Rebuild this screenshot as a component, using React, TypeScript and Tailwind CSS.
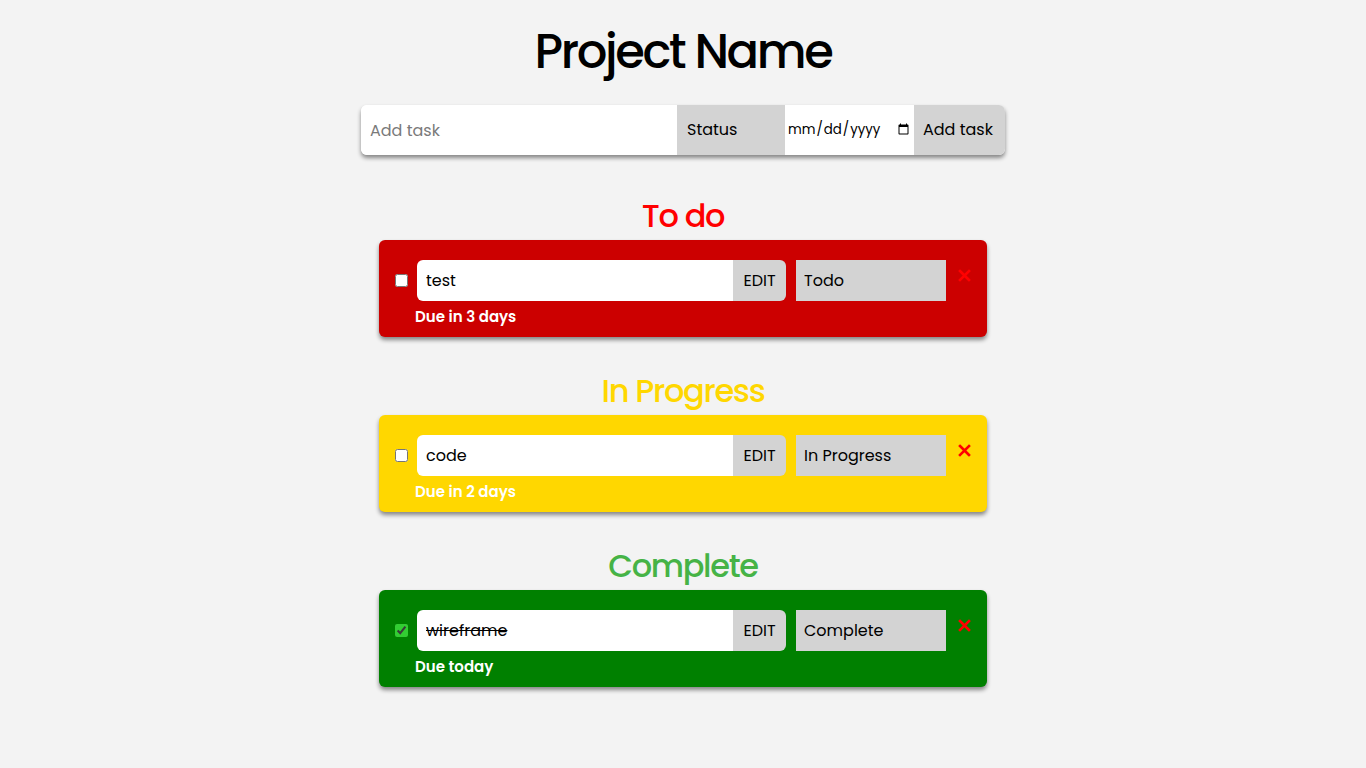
import type React from 'react';
import { useState } from 'react';

type Status = 'Todo' | 'In Progress' | 'Complete';

interface Task {
  id: number;
  name: string;
  status: Status;
  due: string;
  done: boolean;
}

const SECTIONS = [
  { status: 'Todo' as Status, title: 'To do', heading: 'text-[#ff0000]', card: 'bg-[#cc0000]' },
  { status: 'In Progress' as Status, title: 'In Progress', heading: 'text-[#ffd700]', card: 'bg-[#ffd700]' },
  { status: 'Complete' as Status, title: 'Complete', heading: 'text-[#46b346]', card: 'bg-[#008000]' },
];

const INITIAL: Task[] = [
  { id: 1, name: 'test', status: 'Todo', due: 'Due in 3 days', done: false },
  { id: 2, name: 'code', status: 'In Progress', due: 'Due in 2 days', done: false },
  { id: 3, name: 'wireframe', status: 'Complete', due: 'Due today', done: true },
];

const CloseIcon = () => (
  <svg className="w-[13px] h-[13px]" viewBox="0 0 13 13" fill="none">
    <path d="M2 2l9 9M11 2l-9 9" stroke="#ff0000" strokeWidth="2.6" strokeLinecap="square" />
  </svg>
);

const App: React.FC = () => {
  const [tasks, setTasks] = useState<Task[]>(INITIAL);

  const toggle = (id: number) =>
    setTasks((prev) => prev.map((t) => (t.id === id ? { ...t, done: !t.done } : t)));

  return (
    <div className="min-h-screen bg-[#f3f3f3] font-['Poppins','Liberation_Sans',sans-serif] flex flex-col items-center pb-10">
      <h1 className="mt-4 text-[48px] leading-[72px] font-medium tracking-[-2.4px] text-black">
        Project Name
      </h1>

      {/* Add task form */}
      <div className="mt-[17px] w-[644px] h-[50px] flex rounded-md overflow-hidden bg-white shadow-[0_3px_4px_rgba(0,0,0,0.45)]">
        <input
          placeholder="Add task"
          className="w-[316px] h-full px-[9px] text-[16px] text-black placeholder:text-[#7a7a7a] bg-white outline-none"
        />
        <select
          defaultValue=""
          className="w-[108px] h-full pl-[10px] text-[16px] text-black bg-[#d3d3d3] appearance-none outline-none"
        >
          <option value="" disabled>
            Status
          </option>
          <option>Todo</option>
          <option>In Progress</option>
          <option>Complete</option>
        </select>
        <input
          type="date"
          className="w-[129px] h-full px-[2px] text-[13.33px] text-black bg-white outline-none"
        />
        <button className="w-[91px] h-full text-[16px] text-black bg-[#d3d3d3] pl-[9px] text-left">
          Add task
        </button>
      </div>

      <div className="mt-[37px] flex flex-col gap-[30px]">
        {SECTIONS.map((section) => (
          <section key={section.status} className="flex flex-col items-center">
            <h2 className={`text-[32px] leading-[48px] font-medium tracking-[-1.3px] ${section.heading}`}>
              {section.title}
            </h2>
            {tasks
              .filter((t) => t.status === section.status)
              .map((task) => (
                <div
                  key={task.id}
                  className={`w-[608px] rounded-md pt-5 pb-[9px] pl-4 pr-4 shadow-[0_3px_4px_rgba(0,0,0,0.45)] ${section.card}`}
                >
                  <div className="flex items-center">
                    <input
                      type="checkbox"
                      checked={task.done}
                      onChange={() => toggle(task.id)}
                      className="w-[13px] h-[13px] m-0 accent-[#32cd32]"
                    />
                    <div className="ml-[9px] flex h-[41px] w-[369px] rounded-md overflow-hidden">
                      <input
                        defaultValue={task.name}
                        className={`w-[316px] h-full px-[9px] text-[16px] text-black bg-white outline-none ${
                          task.done ? 'line-through' : ''
                        }`}
                      />
                      <button className="w-[53px] h-full bg-[#d3d3d3] text-[16px] text-black">
                        EDIT
                      </button>
                    </div>
                    <select
                      defaultValue={task.status}
                      className="ml-[10px] w-[150px] h-[41px] pl-2 text-[16px] text-black bg-[#d3d3d3] appearance-none outline-none"
                    >
                      <option>Todo</option>
                      <option>In Progress</option>
                      <option>Complete</option>
                    </select>
                    <button className="ml-3 self-start mt-[9px]">
                      <CloseIcon />
                    </button>
                  </div>
                  <div className="mt-[5px] pl-5 text-[15px] leading-[22px] font-semibold text-white">
                    {task.due}
                  </div>
                </div>
              ))}
          </section>
        ))}
      </div>
    </div>
  );
};

export default App;
